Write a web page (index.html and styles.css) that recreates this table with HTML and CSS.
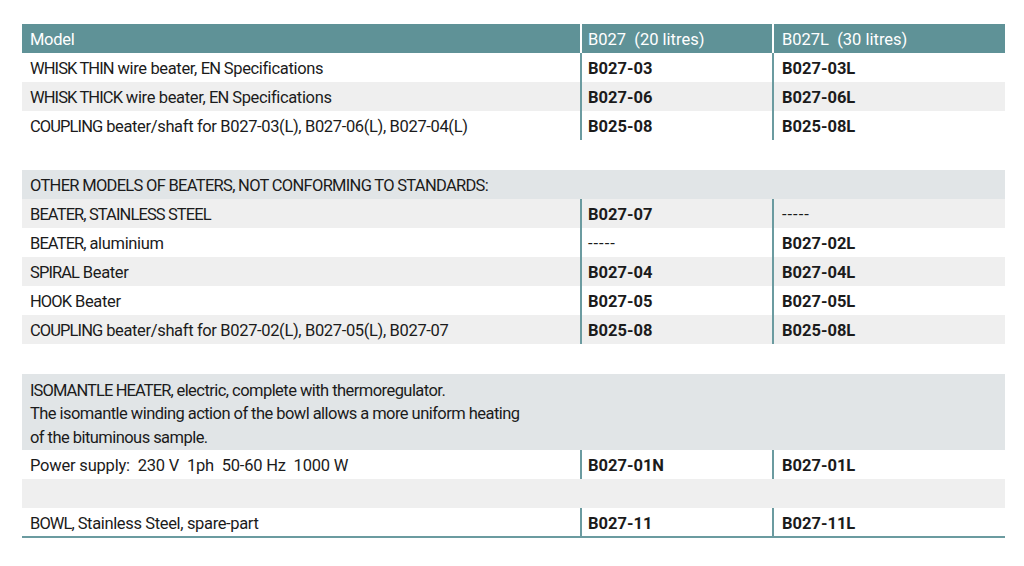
FILE: index.html
```html
<!DOCTYPE html>
<html lang="en">
<head>
<meta charset="utf-8">
<title>B027 accessories</title>
<link rel="stylesheet" href="styles.css">
</head>
<body>
<table class="spec">
  <colgroup>
    <col class="c-desc">
    <col class="c-a">
    <col class="c-b">
  </colgroup>
  <thead>
    <tr class="head">
      <th>Model</th>
      <th class="sep">B027&nbsp; (20 litres)</th>
      <th class="sep sep-b">B027L&nbsp; (30 litres)</th>
    </tr>
  </thead>
  <tbody>
    <tr><td><span class="uc">WHISK THIN</span> wire beater, <span class="uc">EN</span> Specifications</td><td class="code">B027-03</td><td class="code code-b">B027-03L</td></tr>
    <tr class="alt"><td><span class="uc">WHISK THICK</span> wire beater, <span class="uc">EN</span> Specifications</td><td class="code">B027-06</td><td class="code code-b">B027-06L</td></tr>
    <tr><td><span class="uc">COUPLING</span> beater/shaft for B027-03(L), B027-06(L), B027-04(L)</td><td class="code">B025-08</td><td class="code code-b">B025-08L</td></tr>
    <tr class="blank"><td colspan="3"></td></tr>
    <tr class="section"><td colspan="3"><span class="uc">OTHER MODELS OF BEATERS, NOT CONFORMING TO STANDARDS:</span></td></tr>
    <tr class="alt"><td><span class="uc">BEATER, STAINLESS STEEL</span></td><td class="code">B027-07</td><td class="code code-b dash">-----</td></tr>
    <tr><td><span class="uc">BEATER,</span> aluminium</td><td class="code dash">-----</td><td class="code code-b">B027-02L</td></tr>
    <tr class="alt"><td><span class="uc">SPIRAL</span> Beater</td><td class="code">B027-04</td><td class="code code-b">B027-04L</td></tr>
    <tr><td><span class="uc">HOOK</span> Beater</td><td class="code">B027-05</td><td class="code code-b">B027-05L</td></tr>
    <tr class="alt"><td><span class="uc">COUPLING</span> beater/shaft for B027-02(L), B027-05(L), B027-07</td><td class="code">B025-08</td><td class="code code-b">B025-08L</td></tr>
    <tr class="blank"><td colspan="3"></td></tr>
    <tr class="section multi"><td colspan="3"><span class="uc">ISOMANTLE HEATER,</span> electric, complete with thermoregulator.<br>The isomantle winding action of the bowl allows a more uniform heating<br>of the bituminous sample.</td></tr>
    <tr><td class="pre">Power supply:  230 V  1ph  50-60 Hz  1000 W</td><td class="code">B027-01N</td><td class="code code-b">B027-01L</td></tr>
    <tr class="alt gap"><td colspan="3"></td></tr>
    <tr class="last"><td><span class="uc">BOWL,</span> Stainless Steel, spare-part</td><td class="code">B027-11</td><td class="code code-b">B027-11L</td></tr>
  </tbody>
</table>
</body>
</html>
```

FILE: styles.css
```css
html, body {
  margin: 0;
  padding: 0;
  background: #ffffff;
}

body {
  padding: 24px 0 0 22px;
  font-family: Roboto, "Liberation Sans", Arial, sans-serif;
  font-size: 16.5px;
  color: #1b1b1b;
}

.spec {
  width: 983px;
  table-layout: fixed;
  border-collapse: collapse;
  border-spacing: 0;
}

.c-desc { width: 559px; }
.c-a { width: 192px; }
.c-b { width: 232px; }

.spec th,
.spec td {
  height: 29px;
  padding: 3px 0 0 8px;
  box-sizing: border-box;
  text-align: left;
  vertical-align: middle;
  font-weight: normal;
  white-space: nowrap;
  line-height: 20px;
  letter-spacing: -0.35px;
}

.spec .head th {
  background: #5f9297;
  color: #ffffff;
  letter-spacing: 0;
  padding-top: 2px;
}

.spec .head th:first-child {
  letter-spacing: -0.3px;
}

.spec .head th.sep {
  border-left: 2px solid #ffffff;
  padding-left: 6px;
}

.spec .head th.sep-b {
  padding-left: 8px;
}

.uc {
  letter-spacing: -0.9px;
}

.section .uc {
  letter-spacing: -0.7px;
}

.alt td {
  background: #efefef;
}

.spec td.code {
  font-weight: bold;
  letter-spacing: 0;
  border-left: 2px solid #6b9ba0;
  padding-left: 6px;
}

.spec td.code-b {
  padding-left: 8px;
}

.spec td.dash {
  font-weight: normal;
  letter-spacing: 1px;
}

.spec .blank td {
  height: 30px;
  background: #ffffff;
}

.section td {
  background: #e1e5e7;
}

.spec .multi td {
  height: 76px;
  line-height: 23.5px;
  padding-top: 4px;
  letter-spacing: -0.55px;
}

.spec .multi .uc {
  letter-spacing: -0.9px;
}

.spec td.pre {
  white-space: pre;
  letter-spacing: -0.2px;
}

.gap td {
  background: #efefef;
}

.last td {
  border-bottom: 2px solid #6b9ba0;
}
```
